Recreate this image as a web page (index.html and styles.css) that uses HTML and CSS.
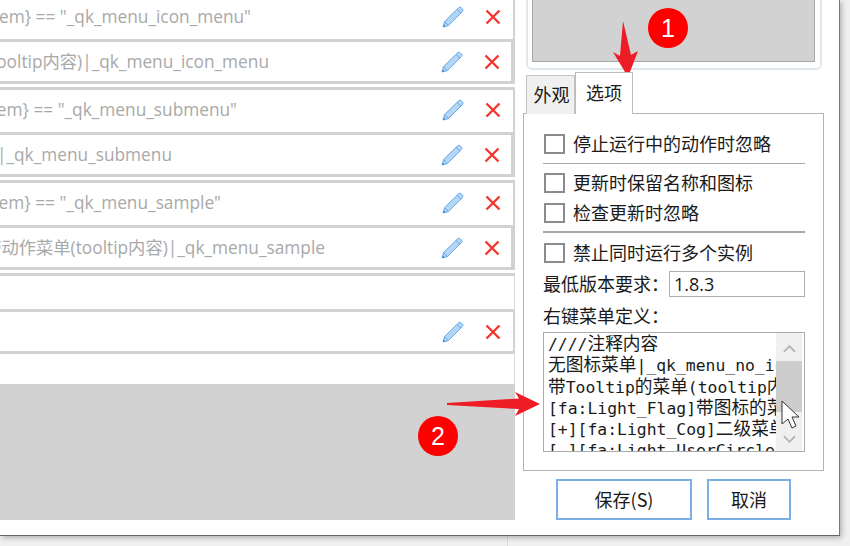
FILE: index.html
```html
<!DOCTYPE html>
<html lang="zh">
<head>
<meta charset="utf-8">
<title>选项</title>
<link rel="stylesheet" href="styles.css">
</head>
<body>
<svg class="defs" width="0" height="0" aria-hidden="true">
  <symbol id="pencil" viewBox="0 0 22 22">
    <path d="M1 21 L2.6 15.6 L16.6 1.8 Q17.8 .8 19 1.6 L20.6 3.2 Q21.4 4.4 20.4 5.6 L6.4 19.6 Z" fill="#b4d6f7" stroke="#6aa8e6" stroke-width="1"/>
    <path d="M15 3.4 L19 7.2 M2.6 15.6 L6.4 19.6" fill="none" stroke="#6aa8e6" stroke-width="1"/>
    <path d="M1 21 L1.8 18.4 L3.6 20.2 Z" fill="#3f86d2"/>
  </symbol>
  <symbol id="cross" viewBox="0 0 16 16">
    <path d="M1.5 1.5 L14.5 14.5 M14.5 1.5 L1.5 14.5" fill="none" stroke="#f4372e" stroke-width="2.4"/>
  </symbol>
</svg>
<div class="window">
  <section class="list">
    <div class="rules">
      <div class="group">
        <div class="row outer"><span class="label w251">{item} == "_qk_menu_icon_menu"</span><span class="actions"><svg class="pen"><use href="#pencil"/></svg><svg class="del"><use href="#cross"/></svg></span></div>
        <div class="row inner"><span class="label w269">带图标的菜单(tooltip内容)|_qk_menu_icon_menu</span><span class="actions"><svg class="pen"><use href="#pencil"/></svg><svg class="del"><use href="#cross"/></svg></span></div>
      </div>
      <div class="group">
        <div class="row outer"><span class="label w237">{item} == "_qk_menu_submenu"</span><span class="actions"><svg class="pen"><use href="#pencil"/></svg><svg class="del"><use href="#cross"/></svg></span></div>
        <div class="row inner"><span class="label w172">二级菜单|_qk_menu_submenu</span><span class="actions"><svg class="pen"><use href="#pencil"/></svg><svg class="del"><use href="#cross"/></svg></span></div>
      </div>
      <div class="group">
        <div class="row outer"><span class="label w221">{item} == "_qk_menu_sample"</span><span class="actions"><svg class="pen"><use href="#pencil"/></svg><svg class="del"><use href="#cross"/></svg></span></div>
        <div class="row inner"><span class="label w325">带动作菜单(tooltip内容)|_qk_menu_sample</span><span class="actions"><svg class="pen"><use href="#pencil"/></svg><svg class="del"><use href="#cross"/></svg></span></div>
      </div>
      <div class="row blank"></div>
      <div class="row short"><span class="actions"><svg class="pen"><use href="#pencil"/></svg><svg class="del"><use href="#cross"/></svg></span></div>
      <div class="row tail"></div>
    </div>
    <div class="empty"></div>
  </section>

  <aside class="side">
    <div class="frame"><div class="preview"></div></div>
    <div class="tabs">
      <div class="tab">外观</div>
      <div class="tab active">选项</div>
    </div>
    <div class="panel">
      <label class="check first"><span class="box"></span>停止运行中的动作时忽略</label>
      <hr class="line thin">
      <label class="check"><span class="box"></span>更新时保留名称和图标</label>
      <label class="check"><span class="box"></span>检查更新时忽略</label>
      <hr class="line thick">
      <label class="check"><span class="box"></span>禁止同时运行多个实例</label>
      <div class="version"><span class="version-label">最低版本要求：</span><span class="input">1.8.3</span></div>
      <div class="menu-title">右键菜单定义：</div>
      <div class="editor">
        <div class="code">
<div>////<i>注释内容</i></div>
<div><i>无图标菜单</i>|_qk_menu_no_icon</div>
<div><i>带</i>Tooltip<i>的菜单</i>(tooltip<i>内容</i>)</div>
<div>[fa:Light_Flag]<i>带图标的菜单</i></div>
<div>[+][fa:Light_Cog]<i>二级菜单</i></div>
<div>[-][fa:Light_UserCircle</div>
        </div>
        <div class="scroll">
          <svg class="chev" viewBox="0 0 14 8"><path d="M1 7 L7 1 L13 7" fill="none" stroke="#b4b4b4" stroke-width="2"/></svg>
          <div class="thumb"></div>
          <svg class="chev" viewBox="0 0 14 8"><path d="M1 1 L7 7 L13 1" fill="none" stroke="#b4b4b4" stroke-width="2"/></svg>
        </div>
      </div>
    </div>
    <div class="buttons">
      <button class="btn save">保存(S)</button>
      <button class="btn cancel">取消</button>
    </div>
  </aside>

  <span class="badge one">1</span>
  <span class="badge two">2</span>
  <svg class="marks" viewBox="0 0 850 546" aria-hidden="true">
    <path d="M623 21 L631 55 L638 51 L628 77 L613 52 L620 56 Z" fill="#ee1c25"/>
    <path d="M447 403 L519 398.5 L515 392 L540 404 L515 416 L519 409 L447 405 Z" fill="#ee1c25"/>
    <path d="M782 401 L782 424 L788 419 L792 428 L796 426 L792 417 L799 417 Z" fill="#fff" stroke="#333" stroke-width="1"/>
  </svg>
</div>
<div class="below"></div>
</body>
</html>
```
FILE: styles.css
```css
* { box-sizing: border-box; }
html, body { margin: 0; height: 546px; overflow: hidden; }
body { background: #f0f0f0; font-family: "Noto Sans CJK SC", "Noto Sans", sans-serif; color: #1a1a1a; }
.defs { position: absolute; }

.window {
  position: relative;
  display: flex;
  width: 840px;
  height: 536px;
  overflow: hidden;
  background: #fff;
  border-right: 1px solid #777;
  border-bottom: 1px solid #666;
  box-shadow: 2px 2px 5px rgba(0,0,0,.25);
}
.below { width: 508px; height: 10px; border-right: 1px solid #dcdcdc; }

/* left list */
.list { width: 515px; height: 535px; padding-bottom: 15px; display: flex; flex-direction: column; flex: none; }
.rules { margin-top: -3px; background: #fff; }
.group { padding-bottom: 3px; border-bottom: 3px solid #d2d2d2; }
.row { display: flex; align-items: center; justify-content: space-between; }
.outer { height: 45px; padding-bottom: 2px; border-bottom: 3px solid #d2d2d2; border-right: 2px solid #d2d2d2; padding-right: 12px; }
.inner { height: 42px; border-bottom: 3px solid #d2d2d2; border-right: 4px solid #d2d2d2; padding-right: 11px; }
.blank { height: 36px; border-bottom: 3px solid #d2d2d2; border-right: 1px solid #dcdcdc; }
.short { height: 42px; border-bottom: 3px solid #d2d2d2; border-right: 2px solid #d2d2d2; padding-right: 12px; justify-content: flex-end; }
.tail { height: 30px; border-right: 1px solid #dcdcdc; }
.label {
  display: flex;
  justify-content: flex-end;
  white-space: nowrap;
  font-family: "Open Sans", "Noto Sans CJK SC", sans-serif;
  font-size: 17.3px;
  line-height: 24px;
  color: #a9a9a9;
}
.w251 { width: 251px; } .w269 { width: 269px; } .w237 { width: 237px; }
.w172 { width: 172px; } .w221 { width: 221px; } .w325 { width: 325px; }
.actions { display: flex; align-items: center; gap: 21px; }
.pen { width: 22px; height: 22px; }
.del { width: 16px; height: 16px; }
.empty { flex: 1; background: #d2d2d2; }

/* right side */
.side { width: 324px; flex: none; }
.frame {
  width: 296px;
  height: 80px;
  margin: -10px 0 0 11px;
  padding: 0 5px 6px 4px;
  border: 2px solid #dfe7ef;
  border-radius: 6px;
}
.preview { height: 100%; width: 283px; background: #d2d2d2; border: 1px solid #a8a8a8; }
.tabs { display: flex; align-items: flex-end; height: 42px; margin: 2px 0 -1px 11px; position: relative; z-index: 1; }
.tab {
  width: 49px;
  height: 39px;
  padding-left: 2px;
  background: #f0f0f0;
  border: 1px solid #c4c4c4;
  border-bottom: 0;
  font-size: 18px;
  line-height: 36px;
  text-align: center;
}
.tab.active { width: 58px; height: 42px; padding-left: 0; background: #fff; border-color: #bcbcbc; line-height: 39px; }
.panel {
  width: 301px;
  height: 358px;
  margin-left: 8px;
  padding: 15px 18px 0 19px;
  border: 1px solid #b4b4b4;
}
.check { display: flex; align-items: center; height: 30px; padding-bottom: 2px; font-size: 18px; line-height: 26px; white-space: nowrap; }
.box { width: 21px; height: 20px; margin: 2px 8px 0 1px; border: 2px solid #8c8c8c; background: #fff; flex: none; }
.line { margin: 0; border: 0; background: #a8a8a8; }
.thin { height: 1px; margin: 4px 0; }
.thick { height: 2px; margin: 3px 0 5px; }
.version { display: flex; align-items: center; justify-content: space-between; height: 26px; margin-top: 3px; font-size: 18px; white-space: nowrap; }
.version-label { margin-bottom: 2px; }
.input {
  flex: none;
  width: 136px;
  height: 26px;
  padding-left: 4px;
  border: 1px solid #aeaeae;
  font-family: "Open Sans", "Noto Sans", sans-serif;
  font-size: 18px;
  line-height: 24px;
}
.menu-title { height: 26px; margin-top: 6px; font-size: 18px; line-height: 24px; white-space: nowrap; }
.editor { display: flex; height: 120px; margin-top: 3px; border: 1px solid #aaa; overflow: hidden; }
.code {
  width: 233px;
  padding: 1px 0 0 4px;
  overflow: hidden;
  white-space: nowrap;
  font-family: "DejaVu Sans Mono", "Liberation Mono", "Noto Sans CJK SC", monospace;
  font-size: 16.4px;
  line-height: 21.3px;
}
.code div { height: 21.3px; }
.code i { font-family: "Noto Sans CJK SC", sans-serif; font-style: normal; font-size: 17.7px; line-height: 1; }
.scroll {
  width: 26px;
  display: flex;
  flex-direction: column;
  align-items: center;
  background: #f0f0f0;
  margin-right: 2px;
}
.chev { width: 13px; height: 8px; flex: none; margin: 12px 0 0; }
.scroll .thumb { width: 100%; height: 51px; margin: 8px 0 23px; background: #cdcdcd; }
.scroll .thumb + .chev { margin: 0; }
.buttons { display: flex; gap: 15px; margin: 8px 0 0 41px; }
.btn {
  height: 41px;
  padding: 0 0 2px;
  background: #fff;
  border: 2px solid #79afe3;
  font-family: inherit;
  font-size: 18px;
  color: #1a1a1a;
}
.save { width: 136px; }
.cancel { width: 84px; }

/* overlays */
.badge {
  position: absolute;
  width: 40px;
  height: 40px;
  border-radius: 50%;
  background: #fe0000;
  color: #fff;
  font-family: "Liberation Sans", sans-serif;
  font-size: 25px;
  line-height: 40px;
  text-align: center;
}
.one { left: 648px; top: 8px; }
.two { left: 418px; top: 416px; }
.marks { position: absolute; left: 0; top: 0; width: 850px; height: 546px; pointer-events: none; }
```
